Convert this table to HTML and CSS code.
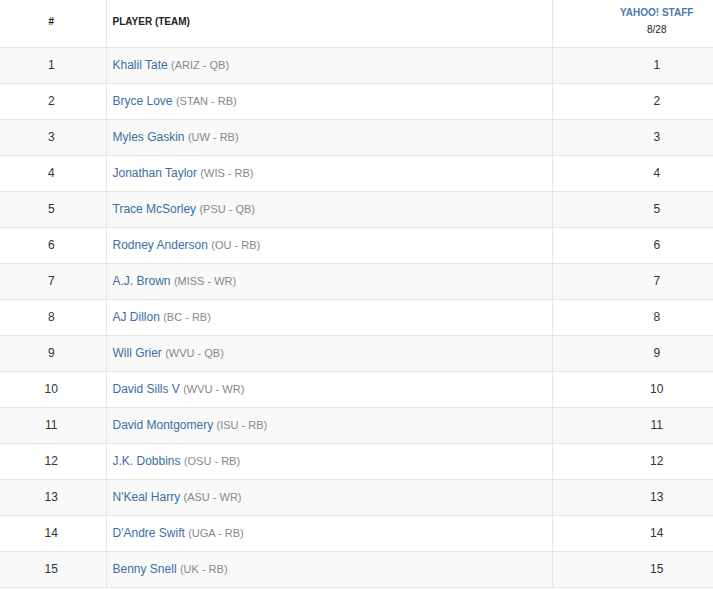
FILE: index.html
```html
<!DOCTYPE html>
<html>
<head>
<meta charset="utf-8">
<link rel="stylesheet" href="styles.css">
</head>
<body>
<table class="rank">
  <thead>
    <tr>
      <th class="c-num">#</th>
      <th class="c-player">PLAYER (TEAM)</th>
      <th class="c-staff"><span class="staff">YAHOO! STAFF</span><span class="date">8/28</span></th>
    </tr>
  </thead>
  <tbody>
    <tr><td class="c-num">1</td><td class="c-player"><a class="name">Khalil Tate</a> <span class="team">(ARIZ - QB)</span></td><td class="c-staff">1</td></tr>
    <tr><td class="c-num">2</td><td class="c-player"><a class="name">Bryce Love</a> <span class="team">(STAN - RB)</span></td><td class="c-staff">2</td></tr>
    <tr><td class="c-num">3</td><td class="c-player"><a class="name">Myles Gaskin</a> <span class="team">(UW - RB)</span></td><td class="c-staff">3</td></tr>
    <tr><td class="c-num">4</td><td class="c-player"><a class="name">Jonathan Taylor</a> <span class="team">(WIS - RB)</span></td><td class="c-staff">4</td></tr>
    <tr><td class="c-num">5</td><td class="c-player"><a class="name">Trace McSorley</a> <span class="team">(PSU - QB)</span></td><td class="c-staff">5</td></tr>
    <tr><td class="c-num">6</td><td class="c-player"><a class="name">Rodney Anderson</a> <span class="team">(OU - RB)</span></td><td class="c-staff">6</td></tr>
    <tr><td class="c-num">7</td><td class="c-player"><a class="name">A.J. Brown</a> <span class="team">(MISS - WR)</span></td><td class="c-staff">7</td></tr>
    <tr><td class="c-num">8</td><td class="c-player"><a class="name">AJ Dillon</a> <span class="team">(BC - RB)</span></td><td class="c-staff">8</td></tr>
    <tr><td class="c-num">9</td><td class="c-player"><a class="name">Will Grier</a> <span class="team">(WVU - QB)</span></td><td class="c-staff">9</td></tr>
    <tr><td class="c-num">10</td><td class="c-player"><a class="name">David Sills V</a> <span class="team">(WVU - WR)</span></td><td class="c-staff">10</td></tr>
    <tr><td class="c-num">11</td><td class="c-player"><a class="name">David Montgomery</a> <span class="team">(ISU - RB)</span></td><td class="c-staff">11</td></tr>
    <tr><td class="c-num">12</td><td class="c-player"><a class="name">J.K. Dobbins</a> <span class="team">(OSU - RB)</span></td><td class="c-staff">12</td></tr>
    <tr><td class="c-num">13</td><td class="c-player"><a class="name">N'Keal Harry</a> <span class="team">(ASU - WR)</span></td><td class="c-staff">13</td></tr>
    <tr><td class="c-num">14</td><td class="c-player"><a class="name">D'Andre Swift</a> <span class="team">(UGA - RB)</span></td><td class="c-staff">14</td></tr>
    <tr><td class="c-num">15</td><td class="c-player"><a class="name">Benny Snell</a> <span class="team">(UK - RB)</span></td><td class="c-staff">15</td></tr>
  </tbody>
</table>
</body>
</html>
```
FILE: styles.css
```css
html, body {
  margin: 0;
  padding: 0;
  background: #fff;
}
body {
  font-family: "Liberation Sans", Arial, sans-serif;
  color: #333;
}
.rank {
  width: 713px;
  border-collapse: collapse;
  table-layout: fixed;
}
.rank th, .rank td {
  padding: 0;
  border-bottom: 1px solid #e6e6e6;
  vertical-align: middle;
}
.rank th {
  height: 47px;
  font-size: 10px;
  font-weight: bold;
  color: #222;
  padding-bottom: 4px;
  box-sizing: border-box;
}
.rank td {
  height: 36px;
  box-sizing: border-box;
  font-size: 12px;
}
.c-num {
  width: 106px;
  text-align: center;
  border-right: 1px solid #e6e6e6;
}
th.c-num, td.c-num {
  padding-right: 3px;
}
.c-player {
  width: 446px;
  text-align: left;
  border-right: 1px solid #e6e6e6;
}
th.c-player, td.c-player {
  padding-left: 6px;
}
.c-staff {
  text-align: center;
}
td.c-staff, th.c-staff {
  padding-left: 48px;
}
.staff {
  display: block;
  color: #4a78ad;
  line-height: 12px;
}
.date {
  display: block;
  font-weight: normal;
  font-size: 10px;
  color: #222;
  line-height: 12px;
  margin-top: 5px;
}
tbody tr:nth-child(odd) {
  background: #f9f9f9;
}
.name {
  color: #3c6ea3;
  text-decoration: none;
}
.team {
  font-size: 11px;
  color: #888;
}
```
